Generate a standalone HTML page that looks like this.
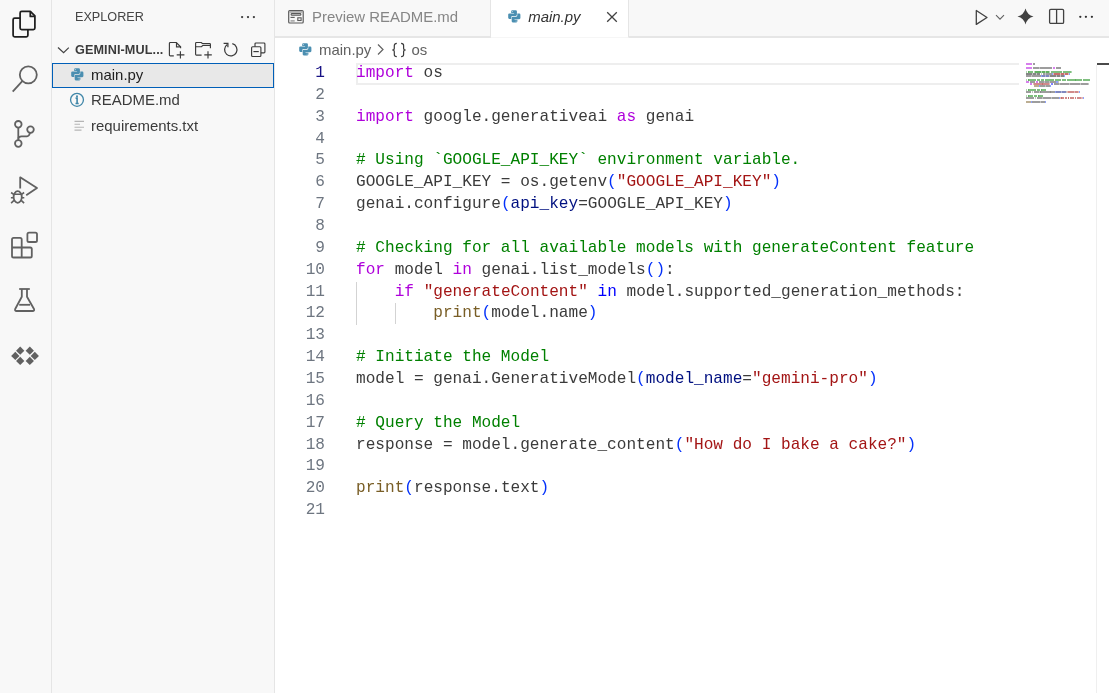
<!DOCTYPE html>
<html><head><meta charset="utf-8">
<style>
*{box-sizing:border-box;margin:0;padding:0}
html,body{width:1109px;height:693px;overflow:hidden;background:#fff;font-family:"Liberation Sans",sans-serif;position:relative}
.abs{position:absolute}
svg{position:absolute;overflow:visible}
#act{position:absolute;left:0;top:0;width:52px;height:693px;background:#f8f8f8;border-right:1px solid #e5e5e5}
#side{position:absolute;left:52px;top:0;width:223px;height:693px;background:#f8f8f8;border-right:1px solid #e5e5e5}
#tabs{position:absolute;left:275px;top:0;width:834px;height:38px;background:#f8f8f8;border-bottom:2px solid #e6e6e6}
.tab{position:absolute;top:0;height:38px;white-space:nowrap}
#t1{left:0;width:216px;background:#f8f8f8;border-right:1px solid #e5e5e5;border-bottom:2px solid #e6e6e6}
#t2{left:216px;width:138px;background:#fff;border-right:1px solid #e5e5e5;border-bottom:1px solid #f6f6f6}
.txt{position:absolute;white-space:nowrap;line-height:1}
.ln{position:absolute;left:275px;width:50px;text-align:right;color:#6e7681;font-family:"Liberation Mono",monospace;font-size:16.1px;line-height:21.86px;height:21.86px}
.ln.act{color:#171184}
.l{position:absolute;left:356px;white-space:pre;color:#3b3b3b;font-family:"Liberation Mono",monospace;font-size:16.1px;line-height:21.86px;height:21.86px}
.kw{color:#af00db}.cm{color:#008000}.st{color:#a31515}.br{color:#0431fa}.pa{color:#001080}.fn{color:#795e26}.bl{color:#0000ff}
.m{position:absolute;height:2px;width:1px;display:block}
.m.df{background:#3b3b3b}.m.kw{background:#af00db}.m.cm{background:#008000}.m.st{background:#a31515}.m.br{background:#0431fa}.m.pa{background:#001080}.m.fn{background:#795e26}.m.bl{background:#0000ff}
.row{position:absolute;left:52px;width:222px;height:25.3px}
.fname{position:absolute;left:91px;font-size:14.95px;color:#3b3b3b;white-space:nowrap;line-height:1}
#w{position:absolute;left:0;top:0;width:1109px;height:693px;overflow:hidden;will-change:transform;background:#fff}
</style></head><body><div id="w">
<!-- activity bar -->
<div id="act"></div>
<svg style="left:0;top:0" width="52" height="400" viewBox="0 0 52 400" fill="none" stroke="#616161" stroke-width="1.8" stroke-linejoin="round" stroke-linecap="butt">
  <!-- files -->
  <g stroke="#1f1f1f" stroke-width="1.75">
    <path d="M21.8 11.3 H30.3 L34.9 15.9 V27.9 a1.6 1.6 0 0 1 -1.6 1.6 H21.7 a1.6 1.6 0 0 1 -1.6 -1.6 V12.9 a1.6 1.6 0 0 1 1.6 -1.6 Z"/>
    <path d="M30.3 11.3 V16.4 H34.9" />
    <path d="M20.1 18.1 H14.7 a1.6 1.6 0 0 0 -1.6 1.6 V35.2 a1.6 1.6 0 0 0 1.6 1.6 H26.3 a1.6 1.6 0 0 0 1.6 -1.6 V29.5"/>
  </g>
  <!-- search -->
  <circle cx="28.3" cy="74.8" r="8.5"/>
  <path d="M22.3 81.2 L12.7 91.7"/>
  <!-- source control -->
  <circle cx="18.3" cy="124.3" r="3.3"/>
  <circle cx="18.3" cy="143.5" r="3.3"/>
  <circle cx="30.5" cy="129.6" r="3.3"/>
  <path d="M18.3 127.6 V140.2"/>
  <path d="M18.3 138.6 Q18.6 136.3 21.5 136.3 H27 Q29.2 136.3 30 132.9"/>
  <!-- run and debug -->
  <path d="M20.2 188.6 V177.3 L37 187.9 L26.2 195.2"/>
  <ellipse cx="17.7" cy="197" rx="4.1" ry="5.8"/>
  <path d="M13.8 194.3 H21.4 M11.1 192.5 L14 194.6 M24.1 192.5 L21.2 194.6 M10.9 197.7 H13.8 M21.4 197.7 H24.3 M11.1 203.2 L14 200.4 M24.1 203.2 L21.2 200.4" stroke-width="1.6"/>
  <!-- extensions -->
  <path d="M13.6 237.8 H20.1 a1.6 1.6 0 0 1 1.6 1.6 V247.5 H30.2 a1.6 1.6 0 0 1 1.6 1.6 V255.9 a1.6 1.6 0 0 1 -1.6 1.6 H13.6 a1.6 1.6 0 0 1 -1.6 -1.6 V239.4 a1.6 1.6 0 0 1 1.6 -1.6 Z"/>
  <path d="M12 247.5 H21.7 V257.5"/>
  <rect x="27.4" y="232.6" width="9.6" height="9.4" rx="1.6"/>
  <!-- testing -->
  <path d="M19.2 289 H29.8"/>
  <path d="M21.8 289 V296.8 L15.2 309 Q14.5 311 16.6 311 H32.6 Q34.7 311 34 309 L27 296.8 V289"/>
  <path d="M19.2 304.8 H30.1"/>
  <!-- remote -->
  <g fill="#616161" stroke="none">
    <path d="M20.20 346.55 L24.35 350.70 L20.20 354.85 L16.05 350.70 Z"/>
    <path d="M15.30 351.75 L19.45 355.90 L15.30 360.05 L11.15 355.90 Z"/>
    <path d="M20.20 356.75 L24.35 360.90 L20.20 365.05 L16.05 360.90 Z"/>
    <path d="M29.80 346.55 L33.95 350.70 L29.80 354.85 L25.65 350.70 Z"/>
    <path d="M34.80 351.75 L38.95 355.90 L34.80 360.05 L30.65 355.90 Z"/>
    <path d="M29.80 356.75 L33.95 360.90 L29.80 365.05 L25.65 360.90 Z"/>
  </g>
</svg>

<!-- sidebar -->
<div id="side"></div>
<div class="txt" style="left:75px;top:11px;font-size:12.65px;color:#454545">EXPLORER</div>
<svg style="left:239px;top:15px" width="18" height="4" viewBox="0 0 18 4" fill="#3b3b3b">
  <circle cx="3.1" cy="2.1" r="1.15"/><circle cx="9" cy="2.1" r="1.15"/><circle cx="14.9" cy="2.1" r="1.15"/>
</svg>
<svg style="left:57px;top:45px" width="14" height="9" viewBox="0 0 14 9" fill="none" stroke="#424242" stroke-width="1.2">
  <path d="M1 2.5 L6.6 7.7 L11.8 2.6"/>
</svg>
<div class="txt" style="left:75px;top:44px;font-size:12.65px;font-weight:bold;color:#3b3b3b;letter-spacing:0.1px">GEMINI-MUL...</div>
<!-- header action icons -->
<svg style="left:160px;top:36px" width="115" height="26" viewBox="160 36 115 26" fill="none" stroke="#3b3b3b" stroke-width="1.15">
  <path d="M173.8 55.9 H170.3 a0.9 0.9 0 0 1 -0.9 -0.9 V43.4 a0.9 0.9 0 0 1 0.9 -0.9 H176.3 L180.6 46.8 V48.3"/>
  <path d="M176.5 42.6 V46.9 H180.6"/>
  <path d="M180.4 51.3 V58.6 M176.7 54.9 H184.4"/>
  <path d="M201.6 55.1 H196.4 a0.8 0.8 0 0 1 -0.8 -0.8 V43.3 a0.8 0.8 0 0 1 0.8 -0.8 H201.3 L202.3 43.5 H209.6 a0.8 0.8 0 0 1 0.8 0.8 V48.3"/>
  <path d="M195.6 46.7 H201.5 L202.9 45.4 H210.4"/>
  <path d="M208 51.2 V58.6 M204.3 54.9 H211.8"/>
  <path d="M232.3 43.7 A6.2 6.2 0 1 1 227.3 44.6" stroke-width="1.25"/>
  <path d="M223.6 43.4 H227.9 V47.3" stroke-width="1.25"/>
  <path d="M255 46.7 V43.9 a0.9 0.9 0 0 1 0.9 -0.9 H264 a0.9 0.9 0 0 1 0.9 0.9 V52 a0.9 0.9 0 0 1 -0.9 0.9 H260.9"/>
  <rect x="251.6" y="46.7" width="9.3" height="9.8" rx="1"/>
  <path d="M253.4 51.6 H258.8"/>
</svg>
<!-- file rows -->
<div class="abs" style="left:52px;top:62.5px;width:222px;height:25.5px;background:#e8e8e8;border:1px solid #005fb8"></div>
<svg style="left:70.6px;top:68.3px" width="12.6" height="12.6" viewBox="0 0 13 13" fill="#4b8fb1"><path d="M4.5 0.2 H8 Q9.2 0.2 9.2 1.4 V4.9 Q9.2 6.1 8 6.1 H4.6 Q3.4 6.1 3.4 7.3 V9.3 H1.4 Q0.2 9.3 0.2 8.1 V4.7 Q0.2 3.5 1.4 3.5 H6.3 V3 H3.3 V1.4 Q3.3 0.2 4.5 0.2 Z"/>
<path transform="rotate(180 6.5 6.5)" d="M4.5 0.2 H8 Q9.2 0.2 9.2 1.4 V4.9 Q9.2 6.1 8 6.1 H4.6 Q3.4 6.1 3.4 7.3 V9.3 H1.4 Q0.2 9.3 0.2 8.1 V4.7 Q0.2 3.5 1.4 3.5 H6.3 V3 H3.3 V1.4 Q3.3 0.2 4.5 0.2 Z"/>
<circle cx="4.6" cy="1.6" r="0.6" fill="#fff" opacity=".6"/>
<circle cx="8.4" cy="11.4" r="0.6" fill="#fff" opacity=".6"/>
</svg>
<div class="txt" style="left:91px;top:68px;font-size:14.95px;color:#1f1f1f">main.py</div>
<svg style="left:69px;top:92px" width="16" height="16" viewBox="0 0 16 16" fill="none" stroke="#3f86a8" stroke-width="1.3">
  <circle cx="8" cy="7.85" r="6.45"/>
  <path d="M6.6 6.1 H8.1 V11.4 M6.5 11.5 H9.7" stroke-width="1.6"/>
  <circle cx="8" cy="4.3" r="1" fill="#3f86a8" stroke="none"/>
</svg>
<div class="txt" style="left:91px;top:93px;font-size:14.95px;color:#3b3b3b">README.md</div>
<svg style="left:74px;top:119px" width="11" height="13" viewBox="0 0 11 13" fill="none" stroke="#b5b5b5" stroke-width="1.1">
  <path d="M0.5 2.4 H10 M0.5 5.2 H6 M0.5 8.3 H10 M0.5 11.1 H7.5"/>
</svg>
<div class="txt" style="left:91px;top:119px;font-size:14.95px;color:#3b3b3b">requirements.txt</div>

<!-- tabs -->
<div id="tabs">
  <div class="tab" id="t1"></div>
  <div class="tab" id="t2"></div>
</div>
<svg style="left:284px;top:6px" width="24" height="22" viewBox="284 6 24 22" fill="none" stroke="#5a5a5a" stroke-width="1.2">
  <rect x="288.7" y="10.6" width="14.5" height="12.4" rx="1"/>
  <rect x="289.3" y="11.2" width="13.3" height="1.6" fill="#a8a8a8" stroke="none"/>
  <rect x="291.1" y="13.6" width="9.8" height="1.7" rx="0.85" stroke-width="1.1"/>
  <path d="M290.5 17.4 H294.7" stroke-width="1.1"/>
  <path d="M290.5 20.9 H294.7" stroke-width="1.4" stroke="#9a9a9a"/>
  <rect x="297.8" y="17.8" width="3.3" height="2.7" stroke-width="1.1"/>
</svg>
<div class="txt" style="left:312px;top:9.5px;font-size:14.95px;color:#868686">Preview README.md</div>
<svg style="left:507.6px;top:10.2px" width="12.6" height="12.6" viewBox="0 0 13 13" fill="#4b8fb1"><path d="M4.5 0.2 H8 Q9.2 0.2 9.2 1.4 V4.9 Q9.2 6.1 8 6.1 H4.6 Q3.4 6.1 3.4 7.3 V9.3 H1.4 Q0.2 9.3 0.2 8.1 V4.7 Q0.2 3.5 1.4 3.5 H6.3 V3 H3.3 V1.4 Q3.3 0.2 4.5 0.2 Z"/>
<path transform="rotate(180 6.5 6.5)" d="M4.5 0.2 H8 Q9.2 0.2 9.2 1.4 V4.9 Q9.2 6.1 8 6.1 H4.6 Q3.4 6.1 3.4 7.3 V9.3 H1.4 Q0.2 9.3 0.2 8.1 V4.7 Q0.2 3.5 1.4 3.5 H6.3 V3 H3.3 V1.4 Q3.3 0.2 4.5 0.2 Z"/>
<circle cx="4.6" cy="1.6" r="0.6" fill="#fff" opacity=".6"/>
<circle cx="8.4" cy="11.4" r="0.6" fill="#fff" opacity=".6"/>
</svg>
<div class="txt" style="left:528.2px;top:9.5px;font-size:14.95px;color:#333;font-style:italic">main.py</div>
<svg style="left:606px;top:11px" width="12" height="12" viewBox="0 0 12 12" fill="none" stroke="#424242" stroke-width="1.3">
  <path d="M1.2 1.2 L10.8 10.8 M10.8 1.2 L1.2 10.8"/>
</svg>
<!-- editor actions -->
<svg style="left:975px;top:9px" width="14" height="17" viewBox="0 0 14 17" fill="none" stroke="#424242" stroke-width="1.3" stroke-linejoin="round">
  <path d="M1.3 1.5 V15.4 L12 8.5 Z"/>
</svg>
<svg style="left:995px;top:14px" width="10" height="7" viewBox="0 0 10 7" fill="none" stroke="#616161" stroke-width="1.1">
  <path d="M1 1.2 L5 5.2 L9 1.2"/>
</svg>
<svg style="left:1017px;top:8.3px" width="17" height="17" viewBox="0 0 17 17" fill="#424242">
  <path d="M8.5 0.5 Q10.1 6.9 16.5 8.5 Q10.1 10.1 8.5 16.5 Q6.9 10.1 0.5 8.5 Q6.9 6.9 8.5 0.5 Z"/>
</svg>
<svg style="left:1048px;top:8px" width="17" height="17" viewBox="0 0 17 17" fill="none" stroke="#424242" stroke-width="1.3">
  <rect x="1.6" y="1.4" width="14" height="14" rx="1.2"/>
  <path d="M8.6 1.4 V15.4"/>
</svg>
<svg style="left:1078px;top:15px" width="17" height="4" viewBox="0 0 17 4" fill="#303030">
  <circle cx="2.3" cy="1.8" r="1.15"/><circle cx="7.9" cy="1.8" r="1.15"/><circle cx="13.9" cy="1.8" r="1.15"/>
</svg>

<!-- breadcrumbs -->
<svg style="left:298.6px;top:43.2px" width="12.6" height="12.6" viewBox="0 0 13 13" fill="#4b8fb1"><path d="M4.5 0.2 H8 Q9.2 0.2 9.2 1.4 V4.9 Q9.2 6.1 8 6.1 H4.6 Q3.4 6.1 3.4 7.3 V9.3 H1.4 Q0.2 9.3 0.2 8.1 V4.7 Q0.2 3.5 1.4 3.5 H6.3 V3 H3.3 V1.4 Q3.3 0.2 4.5 0.2 Z"/>
<path transform="rotate(180 6.5 6.5)" d="M4.5 0.2 H8 Q9.2 0.2 9.2 1.4 V4.9 Q9.2 6.1 8 6.1 H4.6 Q3.4 6.1 3.4 7.3 V9.3 H1.4 Q0.2 9.3 0.2 8.1 V4.7 Q0.2 3.5 1.4 3.5 H6.3 V3 H3.3 V1.4 Q3.3 0.2 4.5 0.2 Z"/>
<circle cx="4.6" cy="1.6" r="0.6" fill="#fff" opacity=".6"/>
<circle cx="8.4" cy="11.4" r="0.6" fill="#fff" opacity=".6"/>
</svg>
<div class="txt" style="left:319px;top:43px;font-size:14.95px;color:#616161">main.py</div>
<svg style="left:376px;top:43px" width="9" height="13" viewBox="0 0 9 13" fill="none" stroke="#616161" stroke-width="1.2">
  <path d="M2 1.5 L7 6.5 L2 11.5"/>
</svg>
<svg style="left:390px;top:42px" width="18" height="16" viewBox="0 0 18 16" fill="none" stroke="#3b3b3b" stroke-width="1.2">
  <path d="M6.8 1.3 Q4.3 1.3 4.3 3.5 V6.2 Q4.3 8 2.2 8 Q4.3 8 4.3 9.8 V12.5 Q4.3 14.7 6.8 14.7"/>
  <path d="M11.1 1.3 Q13.6 1.3 13.6 3.5 V6.2 Q13.6 8 15.7 8 Q13.6 8 13.6 9.8 V12.5 Q13.6 14.7 11.1 14.7"/>
</svg>
<div class="txt" style="left:411.5px;top:43px;font-size:14.95px;color:#616161">os</div>

<!-- current line highlight -->
<div class="abs" style="left:356px;top:62.5px;width:663px;height:22px;border:2px solid #eeeeee;border-right:none"></div>
<!-- indent guides -->
<div class="abs" style="left:356px;top:282px;width:1px;height:42.5px;background:#d3d3d3"></div>
<div class="abs" style="left:395px;top:303.2px;width:1px;height:21.3px;background:#d3d3d3"></div>

<div class="ln act" style="top:63.00px">1</div>
<div class="l" style="top:63.00px"><span class="kw">import</span> os</div>
<div class="ln" style="top:84.86px">2</div>
<div class="l" style="top:84.86px"></div>
<div class="ln" style="top:106.72px">3</div>
<div class="l" style="top:106.72px"><span class="kw">import</span> google.generativeai <span class="kw">as</span> genai</div>
<div class="ln" style="top:128.58px">4</div>
<div class="l" style="top:128.58px"></div>
<div class="ln" style="top:150.44px">5</div>
<div class="l" style="top:150.44px"><span class="cm"># Using `GOOGLE_API_KEY` environment variable.</span></div>
<div class="ln" style="top:172.30px">6</div>
<div class="l" style="top:172.30px">GOOGLE_API_KEY = os.getenv<span class="br">(</span><span class="st">&quot;GOOGLE_API_KEY&quot;</span><span class="br">)</span></div>
<div class="ln" style="top:194.16px">7</div>
<div class="l" style="top:194.16px">genai.configure<span class="br">(</span><span class="pa">api_key</span>=GOOGLE_API_KEY<span class="br">)</span></div>
<div class="ln" style="top:216.02px">8</div>
<div class="l" style="top:216.02px"></div>
<div class="ln" style="top:237.88px">9</div>
<div class="l" style="top:237.88px"><span class="cm"># Checking for all available models with generateContent feature</span></div>
<div class="ln" style="top:259.74px">10</div>
<div class="l" style="top:259.74px"><span class="kw">for</span> model <span class="kw">in</span> genai.list_models<span class="br">()</span>:</div>
<div class="ln" style="top:281.60px">11</div>
<div class="l" style="top:281.60px">    <span class="kw">if</span> <span class="st">&quot;generateContent&quot;</span> <span class="bl">in</span> model.supported_generation_methods:</div>
<div class="ln" style="top:303.46px">12</div>
<div class="l" style="top:303.46px">        <span class="fn">print</span><span class="br">(</span>model.name<span class="br">)</span></div>
<div class="ln" style="top:325.32px">13</div>
<div class="l" style="top:325.32px"></div>
<div class="ln" style="top:347.18px">14</div>
<div class="l" style="top:347.18px"><span class="cm"># Initiate the Model</span></div>
<div class="ln" style="top:369.04px">15</div>
<div class="l" style="top:369.04px">model = genai.GenerativeModel<span class="br">(</span><span class="pa">model_name</span>=<span class="st">&quot;gemini-pro&quot;</span><span class="br">)</span></div>
<div class="ln" style="top:390.90px">16</div>
<div class="l" style="top:390.90px"></div>
<div class="ln" style="top:412.76px">17</div>
<div class="l" style="top:412.76px"><span class="cm"># Query the Model</span></div>
<div class="ln" style="top:434.62px">18</div>
<div class="l" style="top:434.62px">response = model.generate_content<span class="br">(</span><span class="st">&quot;How do I bake a cake?&quot;</span><span class="br">)</span></div>
<div class="ln" style="top:456.48px">19</div>
<div class="l" style="top:456.48px"></div>
<div class="ln" style="top:478.34px">20</div>
<div class="l" style="top:478.34px"><span class="fn">print</span><span class="br">(</span>response.text<span class="br">)</span></div>
<div class="ln" style="top:500.20px">21</div>
<div class="l" style="top:500.20px"></div>

<!-- minimap -->
<i class="m" style="left:1026px;top:63px;background:rgba(175,0,219,0.5)"></i>
<i class="m" style="left:1027px;top:63px;background:rgba(175,0,219,0.5)"></i>
<i class="m" style="left:1028px;top:63px;background:rgba(175,0,219,0.5)"></i>
<i class="m" style="left:1029px;top:63px;background:rgba(175,0,219,0.5)"></i>
<i class="m" style="left:1030px;top:63px;background:rgba(175,0,219,0.5)"></i>
<i class="m" style="left:1031px;top:63px;background:rgba(175,0,219,0.5)"></i>
<i class="m" style="left:1033px;top:63px;background:rgba(59,59,59,0.5)"></i>
<i class="m" style="left:1034px;top:63px;background:rgba(59,59,59,0.5)"></i>
<i class="m" style="left:1026px;top:67px;background:rgba(175,0,219,0.5)"></i>
<i class="m" style="left:1027px;top:67px;background:rgba(175,0,219,0.5)"></i>
<i class="m" style="left:1028px;top:67px;background:rgba(175,0,219,0.5)"></i>
<i class="m" style="left:1029px;top:67px;background:rgba(175,0,219,0.5)"></i>
<i class="m" style="left:1030px;top:67px;background:rgba(175,0,219,0.5)"></i>
<i class="m" style="left:1031px;top:67px;background:rgba(175,0,219,0.5)"></i>
<i class="m" style="left:1033px;top:67px;background:rgba(59,59,59,0.5)"></i>
<i class="m" style="left:1034px;top:67px;background:rgba(59,59,59,0.5)"></i>
<i class="m" style="left:1035px;top:67px;background:rgba(59,59,59,0.5)"></i>
<i class="m" style="left:1036px;top:67px;background:rgba(59,59,59,0.5)"></i>
<i class="m" style="left:1037px;top:67px;background:rgba(59,59,59,0.5)"></i>
<i class="m" style="left:1038px;top:67px;background:rgba(59,59,59,0.5)"></i>
<i class="m" style="left:1039px;top:67px;background:rgba(59,59,59,0.3)"></i>
<i class="m" style="left:1040px;top:67px;background:rgba(59,59,59,0.5)"></i>
<i class="m" style="left:1041px;top:67px;background:rgba(59,59,59,0.5)"></i>
<i class="m" style="left:1042px;top:67px;background:rgba(59,59,59,0.5)"></i>
<i class="m" style="left:1043px;top:67px;background:rgba(59,59,59,0.5)"></i>
<i class="m" style="left:1044px;top:67px;background:rgba(59,59,59,0.5)"></i>
<i class="m" style="left:1045px;top:67px;background:rgba(59,59,59,0.5)"></i>
<i class="m" style="left:1046px;top:67px;background:rgba(59,59,59,0.5)"></i>
<i class="m" style="left:1047px;top:67px;background:rgba(59,59,59,0.5)"></i>
<i class="m" style="left:1048px;top:67px;background:rgba(59,59,59,0.5)"></i>
<i class="m" style="left:1049px;top:67px;background:rgba(59,59,59,0.5)"></i>
<i class="m" style="left:1050px;top:67px;background:rgba(59,59,59,0.5)"></i>
<i class="m" style="left:1051px;top:67px;background:rgba(59,59,59,0.5)"></i>
<i class="m" style="left:1053px;top:67px;background:rgba(175,0,219,0.5)"></i>
<i class="m" style="left:1054px;top:67px;background:rgba(175,0,219,0.5)"></i>
<i class="m" style="left:1056px;top:67px;background:rgba(59,59,59,0.5)"></i>
<i class="m" style="left:1057px;top:67px;background:rgba(59,59,59,0.5)"></i>
<i class="m" style="left:1058px;top:67px;background:rgba(59,59,59,0.5)"></i>
<i class="m" style="left:1059px;top:67px;background:rgba(59,59,59,0.5)"></i>
<i class="m" style="left:1060px;top:67px;background:rgba(59,59,59,0.5)"></i>
<i class="m" style="left:1026px;top:71px;background:rgba(0,128,0,0.3)"></i>
<i class="m" style="left:1028px;top:71px;background:rgba(0,128,0,0.62)"></i>
<i class="m" style="left:1029px;top:71px;background:rgba(0,128,0,0.5)"></i>
<i class="m" style="left:1030px;top:71px;background:rgba(0,128,0,0.5)"></i>
<i class="m" style="left:1031px;top:71px;background:rgba(0,128,0,0.5)"></i>
<i class="m" style="left:1032px;top:71px;background:rgba(0,128,0,0.5)"></i>
<i class="m" style="left:1034px;top:71px;background:rgba(0,128,0,0.3)"></i>
<i class="m" style="left:1035px;top:71px;background:rgba(0,128,0,0.62)"></i>
<i class="m" style="left:1036px;top:71px;background:rgba(0,128,0,0.62)"></i>
<i class="m" style="left:1037px;top:71px;background:rgba(0,128,0,0.62)"></i>
<i class="m" style="left:1038px;top:71px;background:rgba(0,128,0,0.62)"></i>
<i class="m" style="left:1039px;top:71px;background:rgba(0,128,0,0.62)"></i>
<i class="m" style="left:1040px;top:71px;background:rgba(0,128,0,0.62)"></i>
<i class="m" style="left:1041px;top:71px;background:rgba(0,128,0,0.3)"></i>
<i class="m" style="left:1042px;top:71px;background:rgba(0,128,0,0.62)"></i>
<i class="m" style="left:1043px;top:71px;background:rgba(0,128,0,0.62)"></i>
<i class="m" style="left:1044px;top:71px;background:rgba(0,128,0,0.62)"></i>
<i class="m" style="left:1045px;top:71px;background:rgba(0,128,0,0.3)"></i>
<i class="m" style="left:1046px;top:71px;background:rgba(0,128,0,0.62)"></i>
<i class="m" style="left:1047px;top:71px;background:rgba(0,128,0,0.62)"></i>
<i class="m" style="left:1048px;top:71px;background:rgba(0,128,0,0.62)"></i>
<i class="m" style="left:1049px;top:71px;background:rgba(0,128,0,0.3)"></i>
<i class="m" style="left:1051px;top:71px;background:rgba(0,128,0,0.5)"></i>
<i class="m" style="left:1052px;top:71px;background:rgba(0,128,0,0.5)"></i>
<i class="m" style="left:1053px;top:71px;background:rgba(0,128,0,0.5)"></i>
<i class="m" style="left:1054px;top:71px;background:rgba(0,128,0,0.5)"></i>
<i class="m" style="left:1055px;top:71px;background:rgba(0,128,0,0.5)"></i>
<i class="m" style="left:1056px;top:71px;background:rgba(0,128,0,0.5)"></i>
<i class="m" style="left:1057px;top:71px;background:rgba(0,128,0,0.5)"></i>
<i class="m" style="left:1058px;top:71px;background:rgba(0,128,0,0.5)"></i>
<i class="m" style="left:1059px;top:71px;background:rgba(0,128,0,0.5)"></i>
<i class="m" style="left:1060px;top:71px;background:rgba(0,128,0,0.5)"></i>
<i class="m" style="left:1061px;top:71px;background:rgba(0,128,0,0.5)"></i>
<i class="m" style="left:1063px;top:71px;background:rgba(0,128,0,0.5)"></i>
<i class="m" style="left:1064px;top:71px;background:rgba(0,128,0,0.5)"></i>
<i class="m" style="left:1065px;top:71px;background:rgba(0,128,0,0.5)"></i>
<i class="m" style="left:1066px;top:71px;background:rgba(0,128,0,0.5)"></i>
<i class="m" style="left:1067px;top:71px;background:rgba(0,128,0,0.5)"></i>
<i class="m" style="left:1068px;top:71px;background:rgba(0,128,0,0.5)"></i>
<i class="m" style="left:1069px;top:71px;background:rgba(0,128,0,0.5)"></i>
<i class="m" style="left:1070px;top:71px;background:rgba(0,128,0,0.5)"></i>
<i class="m" style="left:1071px;top:71px;background:rgba(0,128,0,0.3)"></i>
<i class="m" style="left:1026px;top:73px;background:rgba(59,59,59,0.62)"></i>
<i class="m" style="left:1027px;top:73px;background:rgba(59,59,59,0.62)"></i>
<i class="m" style="left:1028px;top:73px;background:rgba(59,59,59,0.62)"></i>
<i class="m" style="left:1029px;top:73px;background:rgba(59,59,59,0.62)"></i>
<i class="m" style="left:1030px;top:73px;background:rgba(59,59,59,0.62)"></i>
<i class="m" style="left:1031px;top:73px;background:rgba(59,59,59,0.62)"></i>
<i class="m" style="left:1032px;top:73px;background:rgba(59,59,59,0.3)"></i>
<i class="m" style="left:1033px;top:73px;background:rgba(59,59,59,0.62)"></i>
<i class="m" style="left:1034px;top:73px;background:rgba(59,59,59,0.62)"></i>
<i class="m" style="left:1035px;top:73px;background:rgba(59,59,59,0.62)"></i>
<i class="m" style="left:1036px;top:73px;background:rgba(59,59,59,0.3)"></i>
<i class="m" style="left:1037px;top:73px;background:rgba(59,59,59,0.62)"></i>
<i class="m" style="left:1038px;top:73px;background:rgba(59,59,59,0.62)"></i>
<i class="m" style="left:1039px;top:73px;background:rgba(59,59,59,0.62)"></i>
<i class="m" style="left:1041px;top:73px;background:rgba(59,59,59,0.3)"></i>
<i class="m" style="left:1043px;top:73px;background:rgba(59,59,59,0.5)"></i>
<i class="m" style="left:1044px;top:73px;background:rgba(59,59,59,0.5)"></i>
<i class="m" style="left:1045px;top:73px;background:rgba(59,59,59,0.3)"></i>
<i class="m" style="left:1046px;top:73px;background:rgba(59,59,59,0.5)"></i>
<i class="m" style="left:1047px;top:73px;background:rgba(59,59,59,0.5)"></i>
<i class="m" style="left:1048px;top:73px;background:rgba(59,59,59,0.5)"></i>
<i class="m" style="left:1049px;top:73px;background:rgba(59,59,59,0.5)"></i>
<i class="m" style="left:1050px;top:73px;background:rgba(59,59,59,0.5)"></i>
<i class="m" style="left:1051px;top:73px;background:rgba(59,59,59,0.5)"></i>
<i class="m" style="left:1052px;top:73px;background:rgba(4,49,250,0.45)"></i>
<i class="m" style="left:1053px;top:73px;background:rgba(163,21,21,0.3)"></i>
<i class="m" style="left:1054px;top:73px;background:rgba(163,21,21,0.62)"></i>
<i class="m" style="left:1055px;top:73px;background:rgba(163,21,21,0.62)"></i>
<i class="m" style="left:1056px;top:73px;background:rgba(163,21,21,0.62)"></i>
<i class="m" style="left:1057px;top:73px;background:rgba(163,21,21,0.62)"></i>
<i class="m" style="left:1058px;top:73px;background:rgba(163,21,21,0.62)"></i>
<i class="m" style="left:1059px;top:73px;background:rgba(163,21,21,0.62)"></i>
<i class="m" style="left:1060px;top:73px;background:rgba(163,21,21,0.3)"></i>
<i class="m" style="left:1061px;top:73px;background:rgba(163,21,21,0.62)"></i>
<i class="m" style="left:1062px;top:73px;background:rgba(163,21,21,0.62)"></i>
<i class="m" style="left:1063px;top:73px;background:rgba(163,21,21,0.62)"></i>
<i class="m" style="left:1064px;top:73px;background:rgba(163,21,21,0.3)"></i>
<i class="m" style="left:1065px;top:73px;background:rgba(163,21,21,0.62)"></i>
<i class="m" style="left:1066px;top:73px;background:rgba(163,21,21,0.62)"></i>
<i class="m" style="left:1067px;top:73px;background:rgba(163,21,21,0.62)"></i>
<i class="m" style="left:1068px;top:73px;background:rgba(163,21,21,0.3)"></i>
<i class="m" style="left:1069px;top:73px;background:rgba(4,49,250,0.45)"></i>
<i class="m" style="left:1026px;top:75px;background:rgba(59,59,59,0.5)"></i>
<i class="m" style="left:1027px;top:75px;background:rgba(59,59,59,0.5)"></i>
<i class="m" style="left:1028px;top:75px;background:rgba(59,59,59,0.5)"></i>
<i class="m" style="left:1029px;top:75px;background:rgba(59,59,59,0.5)"></i>
<i class="m" style="left:1030px;top:75px;background:rgba(59,59,59,0.5)"></i>
<i class="m" style="left:1031px;top:75px;background:rgba(59,59,59,0.3)"></i>
<i class="m" style="left:1032px;top:75px;background:rgba(59,59,59,0.5)"></i>
<i class="m" style="left:1033px;top:75px;background:rgba(59,59,59,0.5)"></i>
<i class="m" style="left:1034px;top:75px;background:rgba(59,59,59,0.5)"></i>
<i class="m" style="left:1035px;top:75px;background:rgba(59,59,59,0.5)"></i>
<i class="m" style="left:1036px;top:75px;background:rgba(59,59,59,0.5)"></i>
<i class="m" style="left:1037px;top:75px;background:rgba(59,59,59,0.5)"></i>
<i class="m" style="left:1038px;top:75px;background:rgba(59,59,59,0.5)"></i>
<i class="m" style="left:1039px;top:75px;background:rgba(59,59,59,0.5)"></i>
<i class="m" style="left:1040px;top:75px;background:rgba(59,59,59,0.5)"></i>
<i class="m" style="left:1041px;top:75px;background:rgba(4,49,250,0.45)"></i>
<i class="m" style="left:1042px;top:75px;background:rgba(0,16,128,0.5)"></i>
<i class="m" style="left:1043px;top:75px;background:rgba(0,16,128,0.5)"></i>
<i class="m" style="left:1044px;top:75px;background:rgba(0,16,128,0.5)"></i>
<i class="m" style="left:1045px;top:75px;background:rgba(0,16,128,0.3)"></i>
<i class="m" style="left:1046px;top:75px;background:rgba(0,16,128,0.5)"></i>
<i class="m" style="left:1047px;top:75px;background:rgba(0,16,128,0.5)"></i>
<i class="m" style="left:1048px;top:75px;background:rgba(0,16,128,0.5)"></i>
<i class="m" style="left:1049px;top:75px;background:rgba(59,59,59,0.3)"></i>
<i class="m" style="left:1050px;top:75px;background:rgba(59,59,59,0.62)"></i>
<i class="m" style="left:1051px;top:75px;background:rgba(59,59,59,0.62)"></i>
<i class="m" style="left:1052px;top:75px;background:rgba(59,59,59,0.62)"></i>
<i class="m" style="left:1053px;top:75px;background:rgba(59,59,59,0.62)"></i>
<i class="m" style="left:1054px;top:75px;background:rgba(59,59,59,0.62)"></i>
<i class="m" style="left:1055px;top:75px;background:rgba(59,59,59,0.62)"></i>
<i class="m" style="left:1056px;top:75px;background:rgba(59,59,59,0.3)"></i>
<i class="m" style="left:1057px;top:75px;background:rgba(59,59,59,0.62)"></i>
<i class="m" style="left:1058px;top:75px;background:rgba(59,59,59,0.62)"></i>
<i class="m" style="left:1059px;top:75px;background:rgba(59,59,59,0.62)"></i>
<i class="m" style="left:1060px;top:75px;background:rgba(59,59,59,0.3)"></i>
<i class="m" style="left:1061px;top:75px;background:rgba(59,59,59,0.62)"></i>
<i class="m" style="left:1062px;top:75px;background:rgba(59,59,59,0.62)"></i>
<i class="m" style="left:1063px;top:75px;background:rgba(59,59,59,0.62)"></i>
<i class="m" style="left:1064px;top:75px;background:rgba(4,49,250,0.45)"></i>
<i class="m" style="left:1026px;top:79px;background:rgba(0,128,0,0.3)"></i>
<i class="m" style="left:1028px;top:79px;background:rgba(0,128,0,0.62)"></i>
<i class="m" style="left:1029px;top:79px;background:rgba(0,128,0,0.5)"></i>
<i class="m" style="left:1030px;top:79px;background:rgba(0,128,0,0.5)"></i>
<i class="m" style="left:1031px;top:79px;background:rgba(0,128,0,0.5)"></i>
<i class="m" style="left:1032px;top:79px;background:rgba(0,128,0,0.5)"></i>
<i class="m" style="left:1033px;top:79px;background:rgba(0,128,0,0.5)"></i>
<i class="m" style="left:1034px;top:79px;background:rgba(0,128,0,0.5)"></i>
<i class="m" style="left:1035px;top:79px;background:rgba(0,128,0,0.5)"></i>
<i class="m" style="left:1037px;top:79px;background:rgba(0,128,0,0.5)"></i>
<i class="m" style="left:1038px;top:79px;background:rgba(0,128,0,0.5)"></i>
<i class="m" style="left:1039px;top:79px;background:rgba(0,128,0,0.5)"></i>
<i class="m" style="left:1041px;top:79px;background:rgba(0,128,0,0.5)"></i>
<i class="m" style="left:1042px;top:79px;background:rgba(0,128,0,0.5)"></i>
<i class="m" style="left:1043px;top:79px;background:rgba(0,128,0,0.5)"></i>
<i class="m" style="left:1045px;top:79px;background:rgba(0,128,0,0.5)"></i>
<i class="m" style="left:1046px;top:79px;background:rgba(0,128,0,0.5)"></i>
<i class="m" style="left:1047px;top:79px;background:rgba(0,128,0,0.5)"></i>
<i class="m" style="left:1048px;top:79px;background:rgba(0,128,0,0.5)"></i>
<i class="m" style="left:1049px;top:79px;background:rgba(0,128,0,0.5)"></i>
<i class="m" style="left:1050px;top:79px;background:rgba(0,128,0,0.5)"></i>
<i class="m" style="left:1051px;top:79px;background:rgba(0,128,0,0.5)"></i>
<i class="m" style="left:1052px;top:79px;background:rgba(0,128,0,0.5)"></i>
<i class="m" style="left:1053px;top:79px;background:rgba(0,128,0,0.5)"></i>
<i class="m" style="left:1055px;top:79px;background:rgba(0,128,0,0.5)"></i>
<i class="m" style="left:1056px;top:79px;background:rgba(0,128,0,0.5)"></i>
<i class="m" style="left:1057px;top:79px;background:rgba(0,128,0,0.5)"></i>
<i class="m" style="left:1058px;top:79px;background:rgba(0,128,0,0.5)"></i>
<i class="m" style="left:1059px;top:79px;background:rgba(0,128,0,0.5)"></i>
<i class="m" style="left:1060px;top:79px;background:rgba(0,128,0,0.5)"></i>
<i class="m" style="left:1062px;top:79px;background:rgba(0,128,0,0.5)"></i>
<i class="m" style="left:1063px;top:79px;background:rgba(0,128,0,0.5)"></i>
<i class="m" style="left:1064px;top:79px;background:rgba(0,128,0,0.5)"></i>
<i class="m" style="left:1065px;top:79px;background:rgba(0,128,0,0.5)"></i>
<i class="m" style="left:1067px;top:79px;background:rgba(0,128,0,0.5)"></i>
<i class="m" style="left:1068px;top:79px;background:rgba(0,128,0,0.5)"></i>
<i class="m" style="left:1069px;top:79px;background:rgba(0,128,0,0.5)"></i>
<i class="m" style="left:1070px;top:79px;background:rgba(0,128,0,0.5)"></i>
<i class="m" style="left:1071px;top:79px;background:rgba(0,128,0,0.5)"></i>
<i class="m" style="left:1072px;top:79px;background:rgba(0,128,0,0.5)"></i>
<i class="m" style="left:1073px;top:79px;background:rgba(0,128,0,0.5)"></i>
<i class="m" style="left:1074px;top:79px;background:rgba(0,128,0,0.5)"></i>
<i class="m" style="left:1075px;top:79px;background:rgba(0,128,0,0.62)"></i>
<i class="m" style="left:1076px;top:79px;background:rgba(0,128,0,0.5)"></i>
<i class="m" style="left:1077px;top:79px;background:rgba(0,128,0,0.5)"></i>
<i class="m" style="left:1078px;top:79px;background:rgba(0,128,0,0.5)"></i>
<i class="m" style="left:1079px;top:79px;background:rgba(0,128,0,0.5)"></i>
<i class="m" style="left:1080px;top:79px;background:rgba(0,128,0,0.5)"></i>
<i class="m" style="left:1081px;top:79px;background:rgba(0,128,0,0.5)"></i>
<i class="m" style="left:1083px;top:79px;background:rgba(0,128,0,0.5)"></i>
<i class="m" style="left:1084px;top:79px;background:rgba(0,128,0,0.5)"></i>
<i class="m" style="left:1085px;top:79px;background:rgba(0,128,0,0.5)"></i>
<i class="m" style="left:1086px;top:79px;background:rgba(0,128,0,0.5)"></i>
<i class="m" style="left:1087px;top:79px;background:rgba(0,128,0,0.5)"></i>
<i class="m" style="left:1088px;top:79px;background:rgba(0,128,0,0.5)"></i>
<i class="m" style="left:1089px;top:79px;background:rgba(0,128,0,0.5)"></i>
<i class="m" style="left:1026px;top:81px;background:rgba(175,0,219,0.5)"></i>
<i class="m" style="left:1027px;top:81px;background:rgba(175,0,219,0.5)"></i>
<i class="m" style="left:1028px;top:81px;background:rgba(175,0,219,0.5)"></i>
<i class="m" style="left:1030px;top:81px;background:rgba(59,59,59,0.5)"></i>
<i class="m" style="left:1031px;top:81px;background:rgba(59,59,59,0.5)"></i>
<i class="m" style="left:1032px;top:81px;background:rgba(59,59,59,0.5)"></i>
<i class="m" style="left:1033px;top:81px;background:rgba(59,59,59,0.5)"></i>
<i class="m" style="left:1034px;top:81px;background:rgba(59,59,59,0.5)"></i>
<i class="m" style="left:1036px;top:81px;background:rgba(175,0,219,0.5)"></i>
<i class="m" style="left:1037px;top:81px;background:rgba(175,0,219,0.5)"></i>
<i class="m" style="left:1039px;top:81px;background:rgba(59,59,59,0.5)"></i>
<i class="m" style="left:1040px;top:81px;background:rgba(59,59,59,0.5)"></i>
<i class="m" style="left:1041px;top:81px;background:rgba(59,59,59,0.5)"></i>
<i class="m" style="left:1042px;top:81px;background:rgba(59,59,59,0.5)"></i>
<i class="m" style="left:1043px;top:81px;background:rgba(59,59,59,0.5)"></i>
<i class="m" style="left:1044px;top:81px;background:rgba(59,59,59,0.3)"></i>
<i class="m" style="left:1045px;top:81px;background:rgba(59,59,59,0.5)"></i>
<i class="m" style="left:1046px;top:81px;background:rgba(59,59,59,0.5)"></i>
<i class="m" style="left:1047px;top:81px;background:rgba(59,59,59,0.5)"></i>
<i class="m" style="left:1048px;top:81px;background:rgba(59,59,59,0.5)"></i>
<i class="m" style="left:1049px;top:81px;background:rgba(59,59,59,0.3)"></i>
<i class="m" style="left:1050px;top:81px;background:rgba(59,59,59,0.5)"></i>
<i class="m" style="left:1051px;top:81px;background:rgba(59,59,59,0.5)"></i>
<i class="m" style="left:1052px;top:81px;background:rgba(59,59,59,0.5)"></i>
<i class="m" style="left:1053px;top:81px;background:rgba(59,59,59,0.5)"></i>
<i class="m" style="left:1054px;top:81px;background:rgba(59,59,59,0.5)"></i>
<i class="m" style="left:1055px;top:81px;background:rgba(59,59,59,0.5)"></i>
<i class="m" style="left:1056px;top:81px;background:rgba(4,49,250,0.45)"></i>
<i class="m" style="left:1057px;top:81px;background:rgba(4,49,250,0.45)"></i>
<i class="m" style="left:1058px;top:81px;background:rgba(59,59,59,0.3)"></i>
<i class="m" style="left:1030px;top:83px;background:rgba(175,0,219,0.5)"></i>
<i class="m" style="left:1031px;top:83px;background:rgba(175,0,219,0.5)"></i>
<i class="m" style="left:1033px;top:83px;background:rgba(163,21,21,0.3)"></i>
<i class="m" style="left:1034px;top:83px;background:rgba(163,21,21,0.5)"></i>
<i class="m" style="left:1035px;top:83px;background:rgba(163,21,21,0.5)"></i>
<i class="m" style="left:1036px;top:83px;background:rgba(163,21,21,0.5)"></i>
<i class="m" style="left:1037px;top:83px;background:rgba(163,21,21,0.5)"></i>
<i class="m" style="left:1038px;top:83px;background:rgba(163,21,21,0.5)"></i>
<i class="m" style="left:1039px;top:83px;background:rgba(163,21,21,0.5)"></i>
<i class="m" style="left:1040px;top:83px;background:rgba(163,21,21,0.5)"></i>
<i class="m" style="left:1041px;top:83px;background:rgba(163,21,21,0.5)"></i>
<i class="m" style="left:1042px;top:83px;background:rgba(163,21,21,0.62)"></i>
<i class="m" style="left:1043px;top:83px;background:rgba(163,21,21,0.5)"></i>
<i class="m" style="left:1044px;top:83px;background:rgba(163,21,21,0.5)"></i>
<i class="m" style="left:1045px;top:83px;background:rgba(163,21,21,0.5)"></i>
<i class="m" style="left:1046px;top:83px;background:rgba(163,21,21,0.5)"></i>
<i class="m" style="left:1047px;top:83px;background:rgba(163,21,21,0.5)"></i>
<i class="m" style="left:1048px;top:83px;background:rgba(163,21,21,0.5)"></i>
<i class="m" style="left:1049px;top:83px;background:rgba(163,21,21,0.3)"></i>
<i class="m" style="left:1051px;top:83px;background:rgba(0,0,255,0.5)"></i>
<i class="m" style="left:1052px;top:83px;background:rgba(0,0,255,0.5)"></i>
<i class="m" style="left:1054px;top:83px;background:rgba(59,59,59,0.5)"></i>
<i class="m" style="left:1055px;top:83px;background:rgba(59,59,59,0.5)"></i>
<i class="m" style="left:1056px;top:83px;background:rgba(59,59,59,0.5)"></i>
<i class="m" style="left:1057px;top:83px;background:rgba(59,59,59,0.5)"></i>
<i class="m" style="left:1058px;top:83px;background:rgba(59,59,59,0.5)"></i>
<i class="m" style="left:1059px;top:83px;background:rgba(59,59,59,0.3)"></i>
<i class="m" style="left:1060px;top:83px;background:rgba(59,59,59,0.5)"></i>
<i class="m" style="left:1061px;top:83px;background:rgba(59,59,59,0.5)"></i>
<i class="m" style="left:1062px;top:83px;background:rgba(59,59,59,0.5)"></i>
<i class="m" style="left:1063px;top:83px;background:rgba(59,59,59,0.5)"></i>
<i class="m" style="left:1064px;top:83px;background:rgba(59,59,59,0.5)"></i>
<i class="m" style="left:1065px;top:83px;background:rgba(59,59,59,0.5)"></i>
<i class="m" style="left:1066px;top:83px;background:rgba(59,59,59,0.5)"></i>
<i class="m" style="left:1067px;top:83px;background:rgba(59,59,59,0.5)"></i>
<i class="m" style="left:1068px;top:83px;background:rgba(59,59,59,0.5)"></i>
<i class="m" style="left:1069px;top:83px;background:rgba(59,59,59,0.3)"></i>
<i class="m" style="left:1070px;top:83px;background:rgba(59,59,59,0.5)"></i>
<i class="m" style="left:1071px;top:83px;background:rgba(59,59,59,0.5)"></i>
<i class="m" style="left:1072px;top:83px;background:rgba(59,59,59,0.5)"></i>
<i class="m" style="left:1073px;top:83px;background:rgba(59,59,59,0.5)"></i>
<i class="m" style="left:1074px;top:83px;background:rgba(59,59,59,0.5)"></i>
<i class="m" style="left:1075px;top:83px;background:rgba(59,59,59,0.5)"></i>
<i class="m" style="left:1076px;top:83px;background:rgba(59,59,59,0.5)"></i>
<i class="m" style="left:1077px;top:83px;background:rgba(59,59,59,0.5)"></i>
<i class="m" style="left:1078px;top:83px;background:rgba(59,59,59,0.5)"></i>
<i class="m" style="left:1079px;top:83px;background:rgba(59,59,59,0.5)"></i>
<i class="m" style="left:1080px;top:83px;background:rgba(59,59,59,0.3)"></i>
<i class="m" style="left:1081px;top:83px;background:rgba(59,59,59,0.5)"></i>
<i class="m" style="left:1082px;top:83px;background:rgba(59,59,59,0.5)"></i>
<i class="m" style="left:1083px;top:83px;background:rgba(59,59,59,0.5)"></i>
<i class="m" style="left:1084px;top:83px;background:rgba(59,59,59,0.5)"></i>
<i class="m" style="left:1085px;top:83px;background:rgba(59,59,59,0.5)"></i>
<i class="m" style="left:1086px;top:83px;background:rgba(59,59,59,0.5)"></i>
<i class="m" style="left:1087px;top:83px;background:rgba(59,59,59,0.5)"></i>
<i class="m" style="left:1088px;top:83px;background:rgba(59,59,59,0.3)"></i>
<i class="m" style="left:1034px;top:85px;background:rgba(121,94,38,0.5)"></i>
<i class="m" style="left:1035px;top:85px;background:rgba(121,94,38,0.5)"></i>
<i class="m" style="left:1036px;top:85px;background:rgba(121,94,38,0.5)"></i>
<i class="m" style="left:1037px;top:85px;background:rgba(121,94,38,0.5)"></i>
<i class="m" style="left:1038px;top:85px;background:rgba(121,94,38,0.5)"></i>
<i class="m" style="left:1039px;top:85px;background:rgba(4,49,250,0.45)"></i>
<i class="m" style="left:1040px;top:85px;background:rgba(59,59,59,0.5)"></i>
<i class="m" style="left:1041px;top:85px;background:rgba(59,59,59,0.5)"></i>
<i class="m" style="left:1042px;top:85px;background:rgba(59,59,59,0.5)"></i>
<i class="m" style="left:1043px;top:85px;background:rgba(59,59,59,0.5)"></i>
<i class="m" style="left:1044px;top:85px;background:rgba(59,59,59,0.5)"></i>
<i class="m" style="left:1045px;top:85px;background:rgba(59,59,59,0.3)"></i>
<i class="m" style="left:1046px;top:85px;background:rgba(59,59,59,0.5)"></i>
<i class="m" style="left:1047px;top:85px;background:rgba(59,59,59,0.5)"></i>
<i class="m" style="left:1048px;top:85px;background:rgba(59,59,59,0.5)"></i>
<i class="m" style="left:1049px;top:85px;background:rgba(59,59,59,0.5)"></i>
<i class="m" style="left:1050px;top:85px;background:rgba(4,49,250,0.45)"></i>
<i class="m" style="left:1026px;top:89px;background:rgba(0,128,0,0.3)"></i>
<i class="m" style="left:1028px;top:89px;background:rgba(0,128,0,0.62)"></i>
<i class="m" style="left:1029px;top:89px;background:rgba(0,128,0,0.5)"></i>
<i class="m" style="left:1030px;top:89px;background:rgba(0,128,0,0.5)"></i>
<i class="m" style="left:1031px;top:89px;background:rgba(0,128,0,0.5)"></i>
<i class="m" style="left:1032px;top:89px;background:rgba(0,128,0,0.5)"></i>
<i class="m" style="left:1033px;top:89px;background:rgba(0,128,0,0.5)"></i>
<i class="m" style="left:1034px;top:89px;background:rgba(0,128,0,0.5)"></i>
<i class="m" style="left:1035px;top:89px;background:rgba(0,128,0,0.5)"></i>
<i class="m" style="left:1037px;top:89px;background:rgba(0,128,0,0.5)"></i>
<i class="m" style="left:1038px;top:89px;background:rgba(0,128,0,0.5)"></i>
<i class="m" style="left:1039px;top:89px;background:rgba(0,128,0,0.5)"></i>
<i class="m" style="left:1041px;top:89px;background:rgba(0,128,0,0.62)"></i>
<i class="m" style="left:1042px;top:89px;background:rgba(0,128,0,0.5)"></i>
<i class="m" style="left:1043px;top:89px;background:rgba(0,128,0,0.5)"></i>
<i class="m" style="left:1044px;top:89px;background:rgba(0,128,0,0.5)"></i>
<i class="m" style="left:1045px;top:89px;background:rgba(0,128,0,0.5)"></i>
<i class="m" style="left:1026px;top:91px;background:rgba(59,59,59,0.5)"></i>
<i class="m" style="left:1027px;top:91px;background:rgba(59,59,59,0.5)"></i>
<i class="m" style="left:1028px;top:91px;background:rgba(59,59,59,0.5)"></i>
<i class="m" style="left:1029px;top:91px;background:rgba(59,59,59,0.5)"></i>
<i class="m" style="left:1030px;top:91px;background:rgba(59,59,59,0.5)"></i>
<i class="m" style="left:1032px;top:91px;background:rgba(59,59,59,0.3)"></i>
<i class="m" style="left:1034px;top:91px;background:rgba(59,59,59,0.5)"></i>
<i class="m" style="left:1035px;top:91px;background:rgba(59,59,59,0.5)"></i>
<i class="m" style="left:1036px;top:91px;background:rgba(59,59,59,0.5)"></i>
<i class="m" style="left:1037px;top:91px;background:rgba(59,59,59,0.5)"></i>
<i class="m" style="left:1038px;top:91px;background:rgba(59,59,59,0.5)"></i>
<i class="m" style="left:1039px;top:91px;background:rgba(59,59,59,0.3)"></i>
<i class="m" style="left:1040px;top:91px;background:rgba(59,59,59,0.62)"></i>
<i class="m" style="left:1041px;top:91px;background:rgba(59,59,59,0.5)"></i>
<i class="m" style="left:1042px;top:91px;background:rgba(59,59,59,0.5)"></i>
<i class="m" style="left:1043px;top:91px;background:rgba(59,59,59,0.5)"></i>
<i class="m" style="left:1044px;top:91px;background:rgba(59,59,59,0.5)"></i>
<i class="m" style="left:1045px;top:91px;background:rgba(59,59,59,0.5)"></i>
<i class="m" style="left:1046px;top:91px;background:rgba(59,59,59,0.5)"></i>
<i class="m" style="left:1047px;top:91px;background:rgba(59,59,59,0.5)"></i>
<i class="m" style="left:1048px;top:91px;background:rgba(59,59,59,0.5)"></i>
<i class="m" style="left:1049px;top:91px;background:rgba(59,59,59,0.5)"></i>
<i class="m" style="left:1050px;top:91px;background:rgba(59,59,59,0.62)"></i>
<i class="m" style="left:1051px;top:91px;background:rgba(59,59,59,0.5)"></i>
<i class="m" style="left:1052px;top:91px;background:rgba(59,59,59,0.5)"></i>
<i class="m" style="left:1053px;top:91px;background:rgba(59,59,59,0.5)"></i>
<i class="m" style="left:1054px;top:91px;background:rgba(59,59,59,0.5)"></i>
<i class="m" style="left:1055px;top:91px;background:rgba(4,49,250,0.45)"></i>
<i class="m" style="left:1056px;top:91px;background:rgba(0,16,128,0.5)"></i>
<i class="m" style="left:1057px;top:91px;background:rgba(0,16,128,0.5)"></i>
<i class="m" style="left:1058px;top:91px;background:rgba(0,16,128,0.5)"></i>
<i class="m" style="left:1059px;top:91px;background:rgba(0,16,128,0.5)"></i>
<i class="m" style="left:1060px;top:91px;background:rgba(0,16,128,0.5)"></i>
<i class="m" style="left:1061px;top:91px;background:rgba(0,16,128,0.3)"></i>
<i class="m" style="left:1062px;top:91px;background:rgba(0,16,128,0.5)"></i>
<i class="m" style="left:1063px;top:91px;background:rgba(0,16,128,0.5)"></i>
<i class="m" style="left:1064px;top:91px;background:rgba(0,16,128,0.5)"></i>
<i class="m" style="left:1065px;top:91px;background:rgba(0,16,128,0.5)"></i>
<i class="m" style="left:1066px;top:91px;background:rgba(59,59,59,0.3)"></i>
<i class="m" style="left:1067px;top:91px;background:rgba(163,21,21,0.3)"></i>
<i class="m" style="left:1068px;top:91px;background:rgba(163,21,21,0.5)"></i>
<i class="m" style="left:1069px;top:91px;background:rgba(163,21,21,0.5)"></i>
<i class="m" style="left:1070px;top:91px;background:rgba(163,21,21,0.5)"></i>
<i class="m" style="left:1071px;top:91px;background:rgba(163,21,21,0.5)"></i>
<i class="m" style="left:1072px;top:91px;background:rgba(163,21,21,0.5)"></i>
<i class="m" style="left:1073px;top:91px;background:rgba(163,21,21,0.5)"></i>
<i class="m" style="left:1074px;top:91px;background:rgba(163,21,21,0.3)"></i>
<i class="m" style="left:1075px;top:91px;background:rgba(163,21,21,0.5)"></i>
<i class="m" style="left:1076px;top:91px;background:rgba(163,21,21,0.5)"></i>
<i class="m" style="left:1077px;top:91px;background:rgba(163,21,21,0.5)"></i>
<i class="m" style="left:1078px;top:91px;background:rgba(163,21,21,0.3)"></i>
<i class="m" style="left:1079px;top:91px;background:rgba(4,49,250,0.45)"></i>
<i class="m" style="left:1026px;top:95px;background:rgba(0,128,0,0.3)"></i>
<i class="m" style="left:1028px;top:95px;background:rgba(0,128,0,0.62)"></i>
<i class="m" style="left:1029px;top:95px;background:rgba(0,128,0,0.5)"></i>
<i class="m" style="left:1030px;top:95px;background:rgba(0,128,0,0.5)"></i>
<i class="m" style="left:1031px;top:95px;background:rgba(0,128,0,0.5)"></i>
<i class="m" style="left:1032px;top:95px;background:rgba(0,128,0,0.5)"></i>
<i class="m" style="left:1034px;top:95px;background:rgba(0,128,0,0.5)"></i>
<i class="m" style="left:1035px;top:95px;background:rgba(0,128,0,0.5)"></i>
<i class="m" style="left:1036px;top:95px;background:rgba(0,128,0,0.5)"></i>
<i class="m" style="left:1038px;top:95px;background:rgba(0,128,0,0.62)"></i>
<i class="m" style="left:1039px;top:95px;background:rgba(0,128,0,0.5)"></i>
<i class="m" style="left:1040px;top:95px;background:rgba(0,128,0,0.5)"></i>
<i class="m" style="left:1041px;top:95px;background:rgba(0,128,0,0.5)"></i>
<i class="m" style="left:1042px;top:95px;background:rgba(0,128,0,0.5)"></i>
<i class="m" style="left:1026px;top:97px;background:rgba(59,59,59,0.5)"></i>
<i class="m" style="left:1027px;top:97px;background:rgba(59,59,59,0.5)"></i>
<i class="m" style="left:1028px;top:97px;background:rgba(59,59,59,0.5)"></i>
<i class="m" style="left:1029px;top:97px;background:rgba(59,59,59,0.5)"></i>
<i class="m" style="left:1030px;top:97px;background:rgba(59,59,59,0.5)"></i>
<i class="m" style="left:1031px;top:97px;background:rgba(59,59,59,0.5)"></i>
<i class="m" style="left:1032px;top:97px;background:rgba(59,59,59,0.5)"></i>
<i class="m" style="left:1033px;top:97px;background:rgba(59,59,59,0.5)"></i>
<i class="m" style="left:1035px;top:97px;background:rgba(59,59,59,0.3)"></i>
<i class="m" style="left:1037px;top:97px;background:rgba(59,59,59,0.5)"></i>
<i class="m" style="left:1038px;top:97px;background:rgba(59,59,59,0.5)"></i>
<i class="m" style="left:1039px;top:97px;background:rgba(59,59,59,0.5)"></i>
<i class="m" style="left:1040px;top:97px;background:rgba(59,59,59,0.5)"></i>
<i class="m" style="left:1041px;top:97px;background:rgba(59,59,59,0.5)"></i>
<i class="m" style="left:1042px;top:97px;background:rgba(59,59,59,0.3)"></i>
<i class="m" style="left:1043px;top:97px;background:rgba(59,59,59,0.5)"></i>
<i class="m" style="left:1044px;top:97px;background:rgba(59,59,59,0.5)"></i>
<i class="m" style="left:1045px;top:97px;background:rgba(59,59,59,0.5)"></i>
<i class="m" style="left:1046px;top:97px;background:rgba(59,59,59,0.5)"></i>
<i class="m" style="left:1047px;top:97px;background:rgba(59,59,59,0.5)"></i>
<i class="m" style="left:1048px;top:97px;background:rgba(59,59,59,0.5)"></i>
<i class="m" style="left:1049px;top:97px;background:rgba(59,59,59,0.5)"></i>
<i class="m" style="left:1050px;top:97px;background:rgba(59,59,59,0.5)"></i>
<i class="m" style="left:1051px;top:97px;background:rgba(59,59,59,0.3)"></i>
<i class="m" style="left:1052px;top:97px;background:rgba(59,59,59,0.5)"></i>
<i class="m" style="left:1053px;top:97px;background:rgba(59,59,59,0.5)"></i>
<i class="m" style="left:1054px;top:97px;background:rgba(59,59,59,0.5)"></i>
<i class="m" style="left:1055px;top:97px;background:rgba(59,59,59,0.5)"></i>
<i class="m" style="left:1056px;top:97px;background:rgba(59,59,59,0.5)"></i>
<i class="m" style="left:1057px;top:97px;background:rgba(59,59,59,0.5)"></i>
<i class="m" style="left:1058px;top:97px;background:rgba(59,59,59,0.5)"></i>
<i class="m" style="left:1059px;top:97px;background:rgba(4,49,250,0.45)"></i>
<i class="m" style="left:1060px;top:97px;background:rgba(163,21,21,0.3)"></i>
<i class="m" style="left:1061px;top:97px;background:rgba(163,21,21,0.62)"></i>
<i class="m" style="left:1062px;top:97px;background:rgba(163,21,21,0.5)"></i>
<i class="m" style="left:1063px;top:97px;background:rgba(163,21,21,0.5)"></i>
<i class="m" style="left:1065px;top:97px;background:rgba(163,21,21,0.5)"></i>
<i class="m" style="left:1066px;top:97px;background:rgba(163,21,21,0.5)"></i>
<i class="m" style="left:1068px;top:97px;background:rgba(163,21,21,0.62)"></i>
<i class="m" style="left:1070px;top:97px;background:rgba(163,21,21,0.5)"></i>
<i class="m" style="left:1071px;top:97px;background:rgba(163,21,21,0.5)"></i>
<i class="m" style="left:1072px;top:97px;background:rgba(163,21,21,0.5)"></i>
<i class="m" style="left:1073px;top:97px;background:rgba(163,21,21,0.5)"></i>
<i class="m" style="left:1075px;top:97px;background:rgba(163,21,21,0.5)"></i>
<i class="m" style="left:1077px;top:97px;background:rgba(163,21,21,0.5)"></i>
<i class="m" style="left:1078px;top:97px;background:rgba(163,21,21,0.5)"></i>
<i class="m" style="left:1079px;top:97px;background:rgba(163,21,21,0.5)"></i>
<i class="m" style="left:1080px;top:97px;background:rgba(163,21,21,0.5)"></i>
<i class="m" style="left:1081px;top:97px;background:rgba(163,21,21,0.3)"></i>
<i class="m" style="left:1082px;top:97px;background:rgba(163,21,21,0.3)"></i>
<i class="m" style="left:1083px;top:97px;background:rgba(4,49,250,0.45)"></i>
<i class="m" style="left:1026px;top:101px;background:rgba(121,94,38,0.5)"></i>
<i class="m" style="left:1027px;top:101px;background:rgba(121,94,38,0.5)"></i>
<i class="m" style="left:1028px;top:101px;background:rgba(121,94,38,0.5)"></i>
<i class="m" style="left:1029px;top:101px;background:rgba(121,94,38,0.5)"></i>
<i class="m" style="left:1030px;top:101px;background:rgba(121,94,38,0.5)"></i>
<i class="m" style="left:1031px;top:101px;background:rgba(4,49,250,0.45)"></i>
<i class="m" style="left:1032px;top:101px;background:rgba(59,59,59,0.5)"></i>
<i class="m" style="left:1033px;top:101px;background:rgba(59,59,59,0.5)"></i>
<i class="m" style="left:1034px;top:101px;background:rgba(59,59,59,0.5)"></i>
<i class="m" style="left:1035px;top:101px;background:rgba(59,59,59,0.5)"></i>
<i class="m" style="left:1036px;top:101px;background:rgba(59,59,59,0.5)"></i>
<i class="m" style="left:1037px;top:101px;background:rgba(59,59,59,0.5)"></i>
<i class="m" style="left:1038px;top:101px;background:rgba(59,59,59,0.5)"></i>
<i class="m" style="left:1039px;top:101px;background:rgba(59,59,59,0.5)"></i>
<i class="m" style="left:1040px;top:101px;background:rgba(59,59,59,0.3)"></i>
<i class="m" style="left:1041px;top:101px;background:rgba(59,59,59,0.5)"></i>
<i class="m" style="left:1042px;top:101px;background:rgba(59,59,59,0.5)"></i>
<i class="m" style="left:1043px;top:101px;background:rgba(59,59,59,0.5)"></i>
<i class="m" style="left:1044px;top:101px;background:rgba(59,59,59,0.5)"></i>
<i class="m" style="left:1045px;top:101px;background:rgba(4,49,250,0.45)"></i>
<div class="abs" style="left:1096px;top:65px;width:1px;height:628px;background:#efefef"></div>
<div class="abs" style="left:1097px;top:63px;width:12px;height:2px;background:#4a4a4a"></div>
</div></body></html>
